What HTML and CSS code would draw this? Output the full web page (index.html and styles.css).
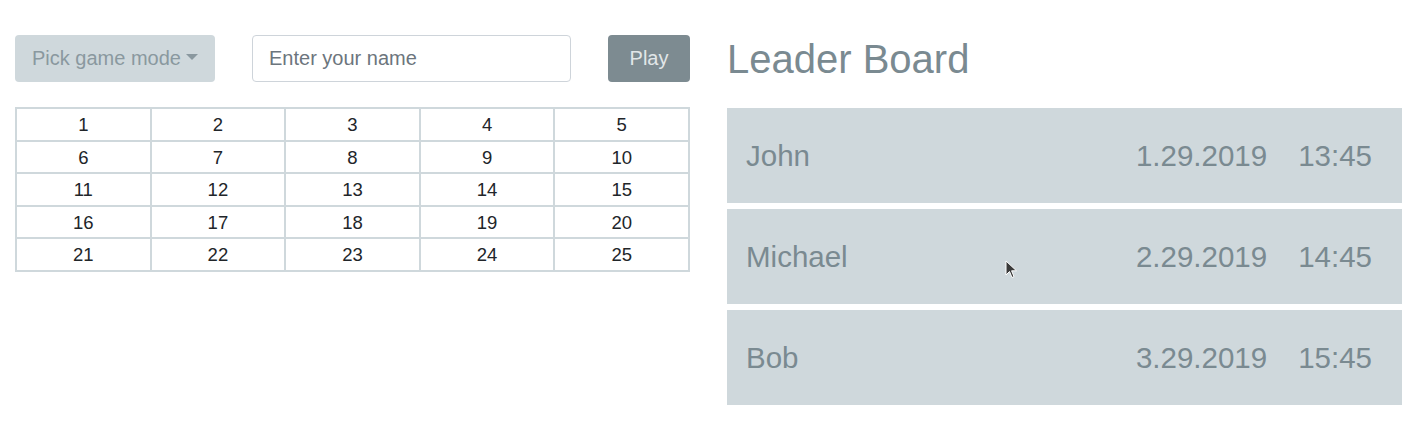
FILE: index.html
```html
<!DOCTYPE html>
<html lang="en">
<head>
<meta charset="utf-8">
<title>Game</title>
<link rel="stylesheet" href="styles.css">
</head>
<body>
<div class="page">
  <section class="game">
    <div class="controls">
      <button class="btn btn-mode" type="button">Pick game mode<span class="caret"></span></button>
      <input class="name-input" type="text" placeholder="Enter your name">
      <button class="btn btn-play" type="button">Play</button>
    </div>
    <div class="board">
      <div class="cell">1</div><div class="cell">2</div><div class="cell">3</div><div class="cell">4</div><div class="cell">5</div>
      <div class="cell">6</div><div class="cell">7</div><div class="cell">8</div><div class="cell">9</div><div class="cell">10</div>
      <div class="cell">11</div><div class="cell">12</div><div class="cell">13</div><div class="cell">14</div><div class="cell">15</div>
      <div class="cell">16</div><div class="cell">17</div><div class="cell">18</div><div class="cell">19</div><div class="cell">20</div>
      <div class="cell">21</div><div class="cell">22</div><div class="cell">23</div><div class="cell">24</div><div class="cell">25</div>
    </div>
  </section>
  <section class="leaders">
    <h1 class="leaders-title">Leader Board</h1>
    <ul class="leader-list">
      <li class="leader"><span class="leader-name">John</span><span class="leader-date">1.29.2019</span><span class="leader-time">13:45</span></li>
      <li class="leader"><span class="leader-name">Michael</span><span class="leader-date">2.29.2019</span><span class="leader-time">14:45</span></li>
      <li class="leader"><span class="leader-name">Bob</span><span class="leader-date">3.29.2019</span><span class="leader-time">15:45</span></li>
    </ul>
  </section>
</div>
<svg class="cursor" width="14" height="20" viewBox="0 0 14 20" aria-hidden="true">
  <path d="M1 1 L1 15 L4.5 11.5 L7 17.5 L9 16.6 L6.6 10.8 L11.5 10.8 Z" fill="#3a3a3a" stroke="#ffffff" stroke-width="1"/>
</svg>
</body>
</html>
```
FILE: styles.css
```css
* { box-sizing: border-box; }

html, body {
  margin: 0;
  padding: 0;
  background: #ffffff;
  font-family: "Liberation Sans", Arial, Helvetica, sans-serif;
  color: #212529;
}

.page {
  display: grid;
  grid-template-columns: 675px 675px;
  column-gap: 37px;
  padding: 35px 14px 0 15px;
}

.controls {
  display: flex;
  gap: 37px;
  height: 47px;
  margin-bottom: 25px;
}

.btn {
  border: 1px solid transparent;
  border-radius: 4px;
  font-family: inherit;
  font-size: 20px;
  line-height: 29px;
  padding: 8px 16px;
  height: 47px;
  cursor: pointer;
}

.btn-mode {
  width: 200px;
  background: #cfd8dc;
  color: #8a989f;
  text-align: left;
  white-space: nowrap;
}

.caret {
  display: inline-block;
  margin-left: 5px;
  vertical-align: 5px;
  border-top: 6px solid #8a989f;
  border-left: 6px solid transparent;
  border-right: 6px solid transparent;
}

.name-input {
  width: 319px;
  height: 47px;
  border: 1px solid #ced4da;
  border-radius: 4px;
  padding: 8px 16px;
  font-family: inherit;
  font-size: 20px;
  color: #495057;
  background: #ffffff;
}

.name-input::placeholder {
  color: #6c757d;
  opacity: 1;
}

.btn-play {
  width: 82px;
  background: #7d8b91;
  color: #e1e6e8;
  text-align: center;
}

.board {
  display: grid;
  grid-template-columns: repeat(5, 1fr);
  grid-auto-rows: 30.5px;
  gap: 2px;
  padding: 2px;
  background: #cfd8dc;
}

.cell {
  background: #ffffff;
  display: flex;
  align-items: center;
  justify-content: center;
  padding-top: 2px;
  font-size: 18.5px;
  color: #212529;
}

.leaders-title {
  margin: 0 0 25px 0;
  font-size: 40px;
  line-height: 48px;
  font-weight: 400;
  color: #7a8a91;
}

.leader-list {
  list-style: none;
  margin: 0;
  padding: 0;
  display: flex;
  flex-direction: column;
  gap: 6px;
}

.leader {
  display: flex;
  align-items: center;
  height: 95px;
  padding: 0 30px 0 19px;
  background: #cfd8dc;
  color: #7a8a91;
  font-size: 29.5px;
}

.leader-name {
  flex: 1;
}

.leader-time {
  margin-left: 31px;
}

.cursor {
  position: absolute;
  left: 1005px;
  top: 260px;
}
```
